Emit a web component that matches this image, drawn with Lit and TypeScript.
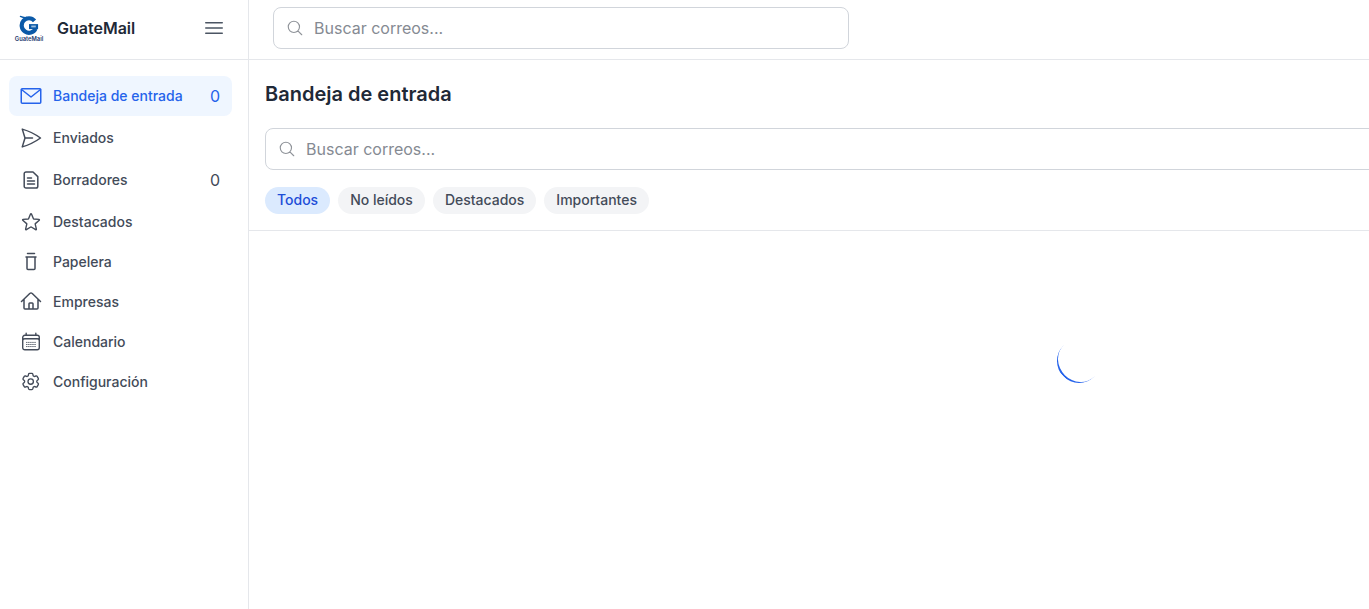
import { LitElement, html, css, svg } from "lit";
import { customElement } from "lit/decorators.js";

const ICONS: Record<string, ReturnType<typeof svg>> = {
  mail: svg`<rect x="2.25" y="4.75" width="19.5" height="14.5" rx="1"/><path d="M2.5 5.5 12 13l9.5-7.5"/>`,
  send: svg`<path d="M6 12 3.269 3.125A59.769 59.769 0 0 1 21.485 12 59.768 59.768 0 0 1 3.27 20.875L5.999 12Zm0 0h7.5"/>`,
  doc: svg`<path d="M14 4H7a1.8 1.8 0 0 0-1.8 1.8v12.4A1.8 1.8 0 0 0 7 20h10a1.8 1.8 0 0 0 1.8-1.8V8.6L14 4ZM8.5 10h4M8.5 13h7M8.5 16h7"/>`,
  star: svg`<g transform="translate(12 11.8) scale(.92) translate(-12 -12)"><path d="M11.48 3.499a.562.562 0 0 1 1.04 0l2.125 5.111a.563.563 0 0 0 .475.345l5.518.442c.499.04.701.663.321.988l-4.204 3.602a.563.563 0 0 0-.182.557l1.285 5.385a.562.562 0 0 1-.84.61l-4.725-2.885a.562.562 0 0 0-.586 0L6.982 20.54a.562.562 0 0 1-.84-.61l1.285-5.386a.562.562 0 0 0-.182-.557l-4.204-3.602a.562.562 0 0 1 .321-.988l5.518-.442a.563.563 0 0 0 .475-.345L11.48 3.5Z"/></g>`,
  trash: svg`<path d="M8.5 3.5h7M7 7h10M8 7v11.5a1 1 0 0 0 1 1h6a1 1 0 0 0 1-1V7"/>`,
  home: svg`<path d="M2.5 11.5 11 3.3a1.4 1.4 0 0 1 2 0l8.5 8.2M5 9.5V18a1 1 0 0 0 1 1h12a1 1 0 0 0 1-1V9.5M10 19v-5.2a.8.8 0 0 1 .8-.8h2.4a.8.8 0 0 1 .8.8V19"/>`,
  cal: svg`<g transform="translate(12 11.5) scale(.92) translate(-12 -12)"><path d="M6.75 3v2.25M17.25 3v2.25M3 18.75V7.5a2.25 2.25 0 0 1 2.25-2.25h13.5A2.25 2.25 0 0 1 21 7.5v11.25m-18 0A2.25 2.25 0 0 0 5.25 21h13.5A2.25 2.25 0 0 0 21 18.75m-18 0v-7.5A2.25 2.25 0 0 1 5.25 9h13.5A2.25 2.25 0 0 1 21 11.25v7.5"/><path stroke-width=".9" stroke-dasharray=".8 1.45" d="M7 13h10M7 15.25h10M7 17.5h10"/></g>`,
  cog: svg`<g transform="translate(11.7 11.5) scale(.9) translate(-12 -12)"><path d="M9.594 3.94c.09-.542.56-.94 1.11-.94h2.593c.55 0 1.02.398 1.11.94l.213 1.281c.063.374.313.686.645.87.074.04.147.083.22.127.325.196.72.257 1.075.124l1.217-.456a1.125 1.125 0 0 1 1.37.49l1.296 2.247a1.125 1.125 0 0 1-.26 1.431l-1.003.827c-.293.241-.438.613-.43.992a7.723 7.723 0 0 1 0 .255c-.008.378.137.75.43.991l1.004.827c.424.35.534.955.26 1.43l-1.298 2.247a1.125 1.125 0 0 1-1.369.491l-1.217-.456c-.355-.133-.75-.072-1.076.124a6.47 6.47 0 0 1-.22.128c-.331.183-.581.495-.644.869l-.213 1.281c-.09.543-.56.94-1.11.94h-2.594c-.55 0-1.019-.398-1.11-.94l-.213-1.281c-.062-.374-.312-.686-.644-.87a6.52 6.52 0 0 1-.22-.127c-.325-.196-.72-.257-1.076-.124l-1.217.456a1.125 1.125 0 0 1-1.369-.49l-1.297-2.247a1.125 1.125 0 0 1 .26-1.431l1.004-.827c.292-.24.437-.613.43-.991a6.932 6.932 0 0 1 0-.255c.007-.38-.138-.751-.43-.992l-1.004-.827a1.125 1.125 0 0 1-.26-1.43l1.297-2.247a1.125 1.125 0 0 1 1.37-.491l1.216.456c.356.133.751.072 1.076-.124.072-.044.146-.086.22-.128.332-.183.582-.495.644-.869l.214-1.28Z"/><path d="M15 12a3 3 0 1 1-6 0 3 3 0 0 1 6 0Z"/></g>`,
  menu: svg`<path d="M3.75 6.75h16.5M3.75 12h16.5m-16.5 5.25h16.5"/>`,
  search: svg`<path d="m21 21-5.197-5.197m0 0A7.5 7.5 0 1 0 5.196 5.196a7.5 7.5 0 0 0 10.607 10.607Z"/>`,
};

const icon = (name: string, cls = "icon") => html`<svg class=${cls} viewBox="0 0 24 24" fill="none" stroke="currentColor" stroke-width="1.5" stroke-linecap="round" stroke-linejoin="round">${ICONS[name]}</svg>`;

const NAV = [
  { label: "Bandeja de entrada", icon: "mail", badge: "0", active: true, wide: true },
  { label: "Enviados", icon: "send", wide: true },
  { label: "Borradores", icon: "doc", badge: "0", wide: true },
  { label: "Destacados", icon: "star" },
  { label: "Papelera", icon: "trash" },
  { label: "Empresas", icon: "home" },
  { label: "Calendario", icon: "cal" },
  { label: "Configuración", icon: "cog" },
];

const CHIPS = ["Todos", "No leídos", "Destacados", "Importantes"];

@customElement("app-root")
export class AppRoot extends LitElement {
  static styles = css`
    :host { display: flex; height: 100vh; overflow: hidden; background: #fff; font-family: Inter, "Liberation Sans", sans-serif; color: #374151; }
    * { box-sizing: border-box; }
    .sidebar { width: 249px; flex: none; border-right: 1px solid #e5e7eb; display: flex; flex-direction: column; }
    .brand { height: 60px; border-bottom: 1px solid #e5e7eb; display: flex; align-items: center; padding: 0 14px 3px; }
    .logo { width: 30px; flex: none; display: flex; flex-direction: column; align-items: center; }
    .logo svg { width: 22px; height: 20px; display: block; }
    .logo span { font-size: 5.8px; line-height: 6px; margin-top: 1px; font-weight: 600; color: #1e3a6e; white-space: nowrap; }
    .name { margin-left: 13px; font-size: 16px; font-weight: 600; color: #1f2937; flex: 1; }
    .menu { width: 24px; height: 24px; color: #4b5563; margin-right: 8px; }
    nav { padding: 16px 16px 0 9px; display: flex; flex-direction: column; }
    .item { height: 40px; display: flex; align-items: center; padding: 0 12px 0 10px; border-radius: 8px; font-size: 14px; font-weight: 500; color: #434b59; }
    .item.wide { margin-bottom: 2px; }
    .item.active { background: #eff6ff; color: #2563eb; }
    .icon { width: 24px; height: 24px; flex: none; margin-right: 10px; }
    .label { flex: 1; white-space: nowrap; padding-bottom: 2px; }
    .badge { font-size: 16px; font-weight: 400; }
    .main { flex: 1; min-width: 0; overflow: hidden; display: flex; flex-direction: column; }
    .top { height: 60px; flex: none; border-bottom: 1px solid #e5e7eb; padding: 7px 24px 0; }
    .search { display: flex; align-items: center; height: 42px; border: 1px solid #d1d5db; border-radius: 8px; padding: 0 12px; background: #fff; }
    .search .sicon { width: 18px; height: 18px; flex: none; margin: 0 10px 0 0; color: #8f9399; }
    .search span { font-size: 16px; color: #858a92; }
    .search.small { width: 576px; }
    .content { width: 1660px; flex: 1; display: flex; flex-direction: column; }
    .head { padding: 20px 16px 16px; border-bottom: 1px solid #e5e7eb; height: 171px; flex: none; }
    h1 { margin: 0 0 20px; font-size: 20px; line-height: 28px; font-weight: 600; color: #1f2937; }
    .chips { display: flex; gap: 8px; margin-top: 17px; }
    .chip { height: 27px; display: flex; align-items: center; padding: 0 12px 2px; border-radius: 14px; background: #f3f4f6; font-size: 14px; font-weight: 500; color: #434b59; }
    .chip.on { background: #dbeafe; color: #1d4ed8; }
    .loading { height: 260px; flex: none; display: flex; align-items: center; justify-content: center; }
    .spinner { width: 44px; height: 44px; border-radius: 50%; border-bottom: 2.5px solid #2563eb; transform: rotate(45deg); }
  `;

  render() {
    return html`
      <aside class="sidebar">
        <div class="brand">
          <div class="logo">
            <svg viewBox="0 0 24 22" fill="none">
              <path d="M18.1 6.4A8 8 0 1 0 19.25 14.9" stroke="#0b5aa8" stroke-width="4.6"/>
              <path d="M2.5 1.5C5 2.6 7 3 9.5 2.6" stroke="#0b5aa8" stroke-width="1.3" stroke-linecap="round"/>
              <rect x="12" y="10" width="10" height="5.5" fill="#0b5aa8"/>
              <rect x="14.5" y="11.6" width="5" height="2" fill="#9dbfe0"/>
            </svg>
            <span>GuateMail</span>
          </div>
          <div class="name">GuateMail</div>
          ${icon("menu", "menu")}
        </div>
        <nav>
          ${NAV.map(n => html`
            <div class="item ${n.active ? "active" : ""} ${n.wide ? "wide" : ""}">
              ${icon(n.icon)}
              <span class="label">${n.label}</span>
              ${n.badge ? html`<span class="badge">${n.badge}</span>` : ""}
            </div>`)}
        </nav>
      </aside>
      <div class="main">
        <div class="top">
          <div class="search small">${icon("search", "sicon")}<span>Buscar correos...</span></div>
        </div>
        <div class="content">
          <div class="head">
            <h1>Bandeja de entrada</h1>
            <div class="search">${icon("search", "sicon")}<span>Buscar correos...</span></div>
            <div class="chips">
              ${CHIPS.map((c, i) => html`<div class="chip ${i === 0 ? "on" : ""}">${c}</div>`)}
            </div>
          </div>
          <div class="loading"><div class="spinner"></div></div>
        </div>
      </div>
    `;
  }
}
